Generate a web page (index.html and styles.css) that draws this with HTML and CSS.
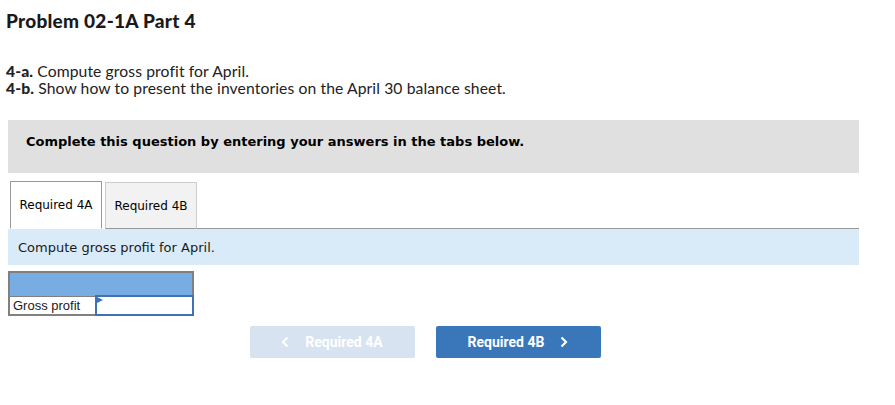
FILE: index.html
```html
<!DOCTYPE html>
<html>
<head>
<meta charset="utf-8">
<link rel="stylesheet" href="styles.css">
</head>
<body>
<div class="page">
  <h1 class="title">Problem 02-1A Part 4</h1>
  <div class="intro">
    <div><b>4-a.</b> Compute gross profit for April.</div>
    <div><b>4-b.</b> Show how to present the inventories on the April 30 balance sheet.</div>
  </div>
  <div class="notice">Complete this question by entering your answers in the tabs below.</div>
  <div class="tabs">
    <div class="tab active">Required 4A</div>
    <div class="tab">Required 4B</div>
    <div class="tab-rest"></div>
  </div>
  <div class="instr">Compute gross profit for April.</div>
  <table class="grid">
    <tr><td class="head" colspan="2"></td></tr>
    <tr>
      <td class="label">Gross profit</td>
      <td class="input"><span class="flag"></span></td>
    </tr>
  </table>
  <div class="nav">
    <button class="btn prev"><svg class="chev" width="8" height="12" viewBox="0 0 8 12"><path d="M6.5 1.5 L2 6 L6.5 10.5" fill="none" stroke="#fff" stroke-width="2.2"/></svg><span>Required 4A</span></button>
    <button class="btn next"><span>Required 4B</span><svg class="chev" width="8" height="12" viewBox="0 0 8 12"><path d="M1.5 1.5 L6 6 L1.5 10.5" fill="none" stroke="#fff" stroke-width="2.2"/></svg></button>
  </div>
</div>
</body>
</html>
```

FILE: styles.css
```css
html, body { margin: 0; padding: 0; background: #fff; }
.page { padding: 0 36px 0 8px; }
.title {
  font-family: "Lato", "Open Sans", sans-serif;
  font-weight: 900;
  font-size: 19px;
  color: #1a1a1a;
  margin: 0 0 0 -2px;
  padding: 11px 0 0 0;
  line-height: 20px;
  letter-spacing: 0.25px;
}
.intro {
  font-family: "Lato", "Open Sans", sans-serif;
  font-size: 15.7px;
  color: #222;
  line-height: 17px;
  margin: 32px 0 0 -2px;
  letter-spacing: 0.1px;
}
.intro b { font-weight: 900; }
.notice {
  margin-top: 23px;
  background: #e0e0e0;
  height: 53px;
  box-sizing: border-box;
  padding: 14px 18px 0;
  font-family: "DejaVu Sans", Verdana, sans-serif;
  font-weight: bold;
  font-size: 13px;
  line-height: 16px;
  color: #000;
}
.tabs {
  margin-top: 8px;
  display: flex;
  align-items: flex-end;
  height: 48px;
  padding-left: 2px;
}
.tab {
  box-sizing: border-box;
  height: 47px;
  width: 92px;
  display: flex;
  align-items: center;
  justify-content: center;
  font-family: "DejaVu Sans", Verdana, sans-serif;
  font-size: 12px;
  color: #000;
  background: #f2f2f2;
  border: 1px solid #cccccc;
  border-bottom: 1px solid #999;
  margin-right: 3px;
}
.tab.active {
  background: #fff;
  border: 1px solid #999;
  border-bottom: 1px solid #fff;
  height: 48px;
}
.tab-rest { flex: 1; border-bottom: 1px solid #999; margin-left: -3px; }
.instr {
  background: #d9ebf9;
  height: 36px;
  box-sizing: border-box;
  padding: 0 10px;
  display: flex;
  align-items: center;
  font-family: "DejaVu Sans", Verdana, sans-serif;
  font-size: 13px;
  color: #1a1a1a;
}
.grid {
  margin-top: 6px;
  border-collapse: collapse;
  border: 2px solid #808080;
  width: 186px;
}
.grid td { padding: 0; }
.grid .head { background: #77ade3; height: 22px; border-bottom: 1px solid #808080; }
.grid .label {
  width: 87px;
  height: 19px;
  font-family: "Liberation Sans", Arial, sans-serif;
  font-size: 13px;
  color: #1a1a1a;
  padding-left: 3px;
  border-right: 1px solid #808080;
  box-sizing: border-box;
}
.grid .input {
  position: relative;
  border: 2px solid #3d73b5;
  background: #fff;
}
.flag {
  position: absolute;
  left: 0;
  top: 0;
  width: 0; height: 0;
  border-top: 3px solid transparent;
  border-bottom: 3px solid transparent;
  border-left: 6px solid #3d73b5;
}
.nav {
  margin-top: 10px;
  display: flex;
  justify-content: center;
  gap: 21px;
  padding-right: 17px;
}
.btn {
  width: 165px;
  height: 32px;
  border: none;
  border-radius: 2px;
  color: #fff;
  font-family: "Roboto", "Liberation Sans", sans-serif;
  font-weight: bold;
  font-size: 14px;
  display: flex;
  align-items: center;
  justify-content: center;
  gap: 16px;
  padding: 0;
}
.btn .chev { display: block; }
.prev { background: #d7e3f1; }
.next { background: #3a76ba; }
```
